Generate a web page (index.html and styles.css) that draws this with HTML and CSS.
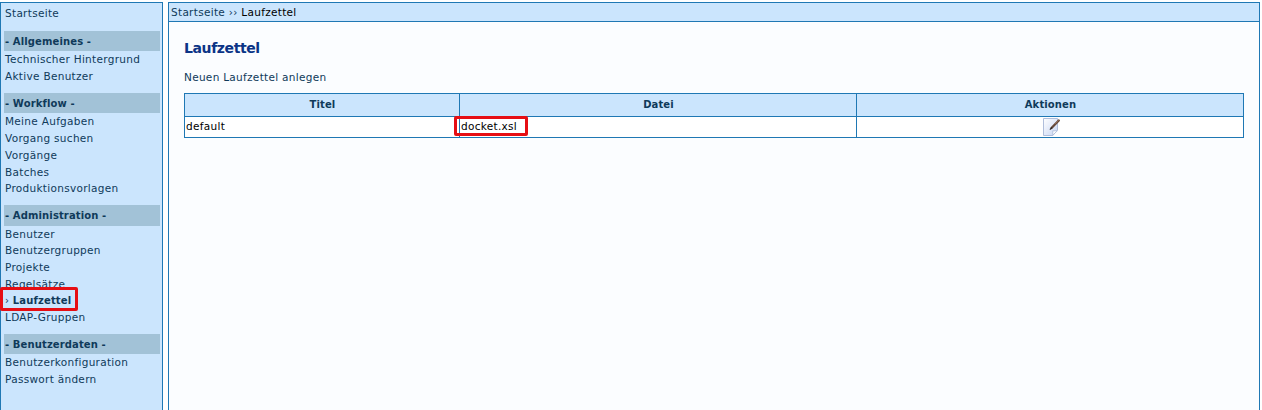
FILE: index.html
```html
<!DOCTYPE html>
<html lang="de">
<head>
<meta charset="utf-8">
<title>Laufzettel</title>
<link rel="stylesheet" href="styles.css">
</head>
<body>
<div class="page">
  <nav class="sidebar">
    <a class="item home">Startseite</a>
    <section class="group">
      <h2>- Allgemeines -</h2>
      <a class="item">Technischer Hintergrund</a>
      <a class="item">Aktive Benutzer</a>
    </section>
    <section class="group">
      <h2>- Workflow -</h2>
      <a class="item">Meine Aufgaben</a>
      <a class="item">Vorgang suchen</a>
      <a class="item">Vorgänge</a>
      <a class="item">Batches</a>
      <a class="item">Produktionsvorlagen</a>
    </section>
    <section class="group">
      <h2>- Administration -</h2>
      <a class="item">Benutzer</a>
      <a class="item">Benutzergruppen</a>
      <a class="item">Projekte</a>
      <a class="item">Regelsätze</a>
      <a class="item active"><span class="arrow">›</span> Laufzettel<span class="mark mark-nav"></span></a>
      <a class="item">LDAP-Gruppen</a>
    </section>
    <section class="group">
      <h2>- Benutzerdaten -</h2>
      <a class="item">Benutzerkonfiguration</a>
      <a class="item">Passwort ändern</a>
    </section>
  </nav>
  <main class="main">
    <div class="crumbs"><a>Startseite</a> ›› <span class="current">Laufzettel</span></div>
    <div class="content">
      <h1>Laufzettel</h1>
      <a class="new">Neuen Laufzettel anlegen</a>
      <div class="table">
        <div class="cell head">Titel</div>
        <div class="cell head">Datei</div>
        <div class="cell head">Aktionen</div>
        <div class="cell">default</div>
        <div class="cell file">docket.xsl<span class="mark mark-file"></span></div>
        <div class="cell action">
          <svg width="18" height="19" viewBox="0 0 18 19">
            <defs><linearGradient id="paper" x1="0" y1="0" x2="1" y2="1"><stop offset="0" stop-color="#fff"/><stop offset="1" stop-color="#c7d5f3"/></linearGradient></defs>
            <path d="M.5 1.5H14.5V13L9.8 18.5H.5Z" fill="url(#paper)" stroke="#b0bedb"/>
            <path d="M9.8 18.2V13.8H14.3Z" fill="#fff" stroke="#a9b9d8" stroke-width=".8"/>
            <path d="M8.5 11L15.8 3.5" stroke="#65483a" stroke-width="2.3" stroke-linecap="round"/>
            <path d="M6.9 12.6L9 10.5" stroke="#292727" stroke-width="1.2"/>
            <path d="M12 7.1L15.8 3.2" stroke="#a57b5e" stroke-width=".7"/>
          </svg>
        </div>
      </div>
    </div>
  </main>
</div>
</body>
</html>
```
FILE: styles.css
```css
* { box-sizing: border-box; }
body {
  margin: 0;
  background: #fff;
  color: #0f3a5a;
  font: 10.5px/16.7px "DejaVu Sans", Verdana, sans-serif;
  letter-spacing: .3px;
}
h1, h2 { margin: 0; font-weight: bold; }
.page {
  display: flex;
  gap: 5px;
  height: 410px;
  padding-top: 2px;
  overflow: hidden;
}
.sidebar {
  width: 163px;
  padding: 3px 2px 0 3px;
  border: 1px solid #1f78b4;
  border-bottom: 0;
  background: #cbe5fd;
}
.item {
  display: block;
  position: relative;
  height: 16.7px;
  padding-left: 1px;
  line-height: 17px;
  white-space: nowrap;
}
.home { line-height: 15.6px; }
.group { padding-top: 8.3px; }
.group h2 {
  height: 20.4px;
  padding-left: 1px;
  background: #a2c2d7;
  font-size: 10px;
  line-height: 21.6px;
  letter-spacing: .12px;
}
.active { font-size: 10px; font-weight: bold; line-height: 17.6px; letter-spacing: .15px; }
.arrow { font-weight: normal; }
.mark {
  position: absolute;
  border: 3px solid #e60e14;
  border-radius: 2px;
}
.mark-nav { left: -4px; top: -5px; width: 78px; height: 24px; z-index: 1; }
.main {
  width: 1092px;
  border: 1px solid #1f78b4;
  border-bottom: 0;
  background: #fbfdff;
}
.crumbs {
  height: 19px;
  padding-left: 2px;
  border-bottom: 1px solid #1f78b4;
  background: #cbe5fd;
  line-height: 19px;
}
.current { color: #000; }
.content { padding: 16px 15px 0; }
h1 {
  height: 20px;
  color: #0b3486;
  font-size: 14px;
  line-height: 20px;
  letter-spacing: -.4px;
}
.new { display: block; height: 17px; margin-top: 11px; line-height: 16px; }
.table {
  display: grid;
  grid-template-columns: 275px 397px 388px;
  grid-template-rows: 23px 21px;
  width: 1060px;
  margin-top: 7px;
  border-top: 1px solid #1f78b4;
}
.cell {
  position: relative;
  padding-left: 1px;
  border-left: 1px solid #1f78b4;
  border-bottom: 1px solid #1f78b4;
  background: #fff;
  color: #000;
  line-height: 18px;
}
.cell:nth-child(3n) { border-right: 1px solid #1f78b4; }
.head {
  background: #cbe5fd;
  color: #0f3a5a;
  font-size: 10px;
  font-weight: bold;
  line-height: 22px;
  text-align: center;
  letter-spacing: .12px;
}
.mark-file { left: -6px; top: -1px; width: 74px; height: 20px; }
.action { padding: 0 0 0 186px; }
.action svg { display: block; }
```
